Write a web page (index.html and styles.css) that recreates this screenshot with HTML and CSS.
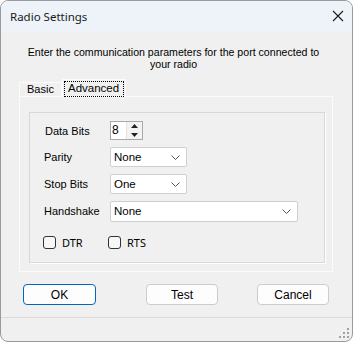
FILE: index.html
```html
<!DOCTYPE html>
<html lang="en">
<head>
  <meta charset="UTF-8" />
  <title>Radio Settings</title>
  <link rel="stylesheet" href="styles.css">
</head>
<body>

<div class="window">
  <div class="titlebar">
    <span class="title">Radio Settings</span>
    <svg class="close" width="12" height="12" viewBox="0 0 12 12">
      <path d="M1 1 L11 11 M11 1 L1 11" stroke="#1a1a1a" stroke-width="1.1" fill="none" />
    </svg>
  </div>

  <div class="client">
    <p class="intro">Enter the communication parameters for the port connected to<br>your radio</p>

    <div class="tabs">
      <span class="tab">Basic</span>
      <span class="tab active"><span class="focus">Advanced</span></span>
    </div>

    <div class="panel">
      <div class="group">
        <div class="row row-bits">
          <label class="lbl lbl-bits">Data Bits</label>
          <div class="spinner">
            <span class="spin-val">8</span>
            <span class="spin-btns">
              <span class="spin-btn">
                <svg width="7" height="4" viewBox="0 0 7 4"><path d="M0 4 L3.5 0 L7 4 Z" fill="#222" /></svg>
              </span>
              <span class="spin-btn">
                <svg width="7" height="4" viewBox="0 0 7 4"><path d="M0 0 L3.5 4 L7 0 Z" fill="#222" /></svg>
              </span>
            </span>
          </div>
        </div>

        <div class="row">
          <label class="lbl">Parity</label>
          <div class="select short">
            <span>None</span>
            <svg class="caret" width="9" height="5" viewBox="0 0 9 5"><path d="M0.5 0.5 L4.5 4.5 L8.5 0.5" stroke="#555" fill="none" /></svg>
          </div>
        </div>

        <div class="row">
          <label class="lbl">Stop Bits</label>
          <div class="select short">
            <span>One</span>
            <svg class="caret" width="9" height="5" viewBox="0 0 9 5"><path d="M0.5 0.5 L4.5 4.5 L8.5 0.5" stroke="#555" fill="none" /></svg>
          </div>
        </div>

        <div class="row">
          <label class="lbl">Handshake</label>
          <div class="select long">
            <span>None</span>
            <svg class="caret" width="9" height="5" viewBox="0 0 9 5"><path d="M0.5 0.5 L4.5 4.5 L8.5 0.5" stroke="#555" fill="none" /></svg>
          </div>
        </div>

        <div class="checks">
          <span class="check"><span class="box"></span>DTR</span>
          <span class="check"><span class="box"></span>RTS</span>
        </div>
      </div>
    </div>

    <div class="buttons">
      <button class="btn default">OK</button>
      <button class="btn test">Test</button>
      <button class="btn cancel">Cancel</button>
    </div>
  </div>

  <div class="statusbar">
    <svg class="grip" width="10" height="10" viewBox="0 0 10 10">
      <rect x="8" y="0" width="2" height="2" fill="#a0a0a0" />
      <rect x="4" y="4" width="2" height="2" fill="#a0a0a0" />
      <rect x="8" y="4" width="2" height="2" fill="#a0a0a0" />
      <rect x="0" y="8" width="2" height="2" fill="#a0a0a0" />
      <rect x="4" y="8" width="2" height="2" fill="#a0a0a0" />
      <rect x="8" y="8" width="2" height="2" fill="#a0a0a0" />
    </svg>
  </div>
</div>

</body>
</html>
```

FILE: styles.css
```css
body {
  margin: 0;
  background-color: #ffffff;
  font-family: 'Liberation Sans', Arial, sans-serif;
  font-size: 11px;
  color: #000;
}

.window {
  box-sizing: border-box;
  width: 353px;
  height: 342px;
  border: 1px solid #9a9a9a;
  border-radius: 8px;
  background-color: #f0f0f0;
  overflow: hidden;
  display: flex;
  flex-direction: column;
}

.titlebar {
  height: 30px;
  flex: 0 0 auto;
  background-color: #eef3f9;
  display: flex;
  align-items: center;
  justify-content: space-between;
  padding: 0 9px;
}

.title {
  font-family: 'Noto Sans', sans-serif;
  font-size: 11.5px;
  color: #1a1a1a;
}

.close {
  margin-right: -1px;
}

.client {
  flex: 1 1 auto;
}

.intro {
  margin: 15px 0 0 0;
  line-height: 12px;
  text-align: center;
  font-size: 10.6px;
  padding-right: 6px;
}

.tabs {
  display: flex;
  align-items: flex-end;
  height: 17px;
  margin: 9px 0 0 18px;
}

.tab {
  box-sizing: border-box;
  height: 14px;
  padding: 0 7px 0 7px;
  border: 1px solid #fbfbfb;
  border-bottom: none;
  line-height: 13px;
  width: 43px;
}

.tab.active {
  height: 17px;
  width: 64px;
  padding: 1px 1px 0 1px;
  background-color: #f0f0f0;
  line-height: 14px;
}

.focus {
  display: block;
  border: 1px dotted #000;
  height: 14px;
  line-height: 13px;
  padding-left: 3px;
  font-size: 11.5px;
}

.panel {
  box-sizing: border-box;
  width: 314px;
  height: 176px;
  margin-left: 18px;
  border: 1px solid #fbfbfb;
  padding: 15px 0 0 9px;
}

.group {
  box-sizing: border-box;
  width: 296px;
  height: 151px;
  border: 1px solid #d8d8d8;
  box-shadow: 1px 1px 0 #ffffff;
  padding: 8px 0 0 14px;
}

.row {
  display: flex;
  align-items: center;
  height: 20px;
  margin-bottom: 7px;
}

.row-bits {
  height: 19px;
}

.lbl {
  width: 66px;
}

.lbl-bits {
  padding-left: 1px;
  width: 65px;
}

.spinner {
  box-sizing: border-box;
  width: 33px;
  height: 19px;
  border: 1px solid #a8a8a8;
  background: #fff;
  display: flex;
}

.spin-val {
  flex: 1;
  padding-left: 1px;
  line-height: 17px;
  font-size: 12px;
}

.spin-btns {
  width: 15px;
  display: flex;
  flex-direction: column;
  border-left: 1px solid #e3e3e3;
}

.spin-btn {
  flex: 1;
  display: flex;
  align-items: center;
  justify-content: center;
  background: #f3f3f3;
}

.select {
  box-sizing: border-box;
  height: 20px;
  border: 1px solid #cfcfcf;
  border-radius: 2px;
  background: #fff;
  display: flex;
  align-items: center;
  justify-content: space-between;
  padding: 0 6px 0 3px;
  font-size: 11.5px;
}

.select.short {
  width: 77px;
}

.select.long {
  width: 188px;
  height: 21px;
}

.caret {
  margin-top: 1px;
}

.checks {
  display: flex;
  margin: 14px 0 0 -1px;
  font-family: 'Noto Sans', sans-serif;
  font-size: 11px;
}

.check {
  display: flex;
  align-items: center;
  width: 65px;
}

.box {
  box-sizing: border-box;
  width: 13px;
  height: 13px;
  border: 1px solid #333;
  border-radius: 3px;
  margin-right: 6px;
  background: #f7f7f7;
}

.buttons {
  display: flex;
  margin: 12px 0 0 22px;
}

.btn {
  box-sizing: border-box;
  height: 21px;
  border: 1px solid #cccccc;
  border-radius: 4px;
  background-color: #fdfdfd;
  font-family: 'Liberation Sans', Arial, sans-serif;
  font-size: 12px;
  color: #000;
  padding: 0;
}

.btn.default {
  width: 73px;
  border-color: #0067c0;
}

.btn.test {
  width: 72px;
  margin-left: 50px;
}

.btn.cancel {
  width: 72px;
  margin-left: 39px;
}

.statusbar {
  flex: 0 0 auto;
  height: 20px;
  border-top: 1px solid #dadada;
  display: flex;
  justify-content: flex-end;
  align-items: flex-end;
  padding: 0 3px 3px 0;
}
```
